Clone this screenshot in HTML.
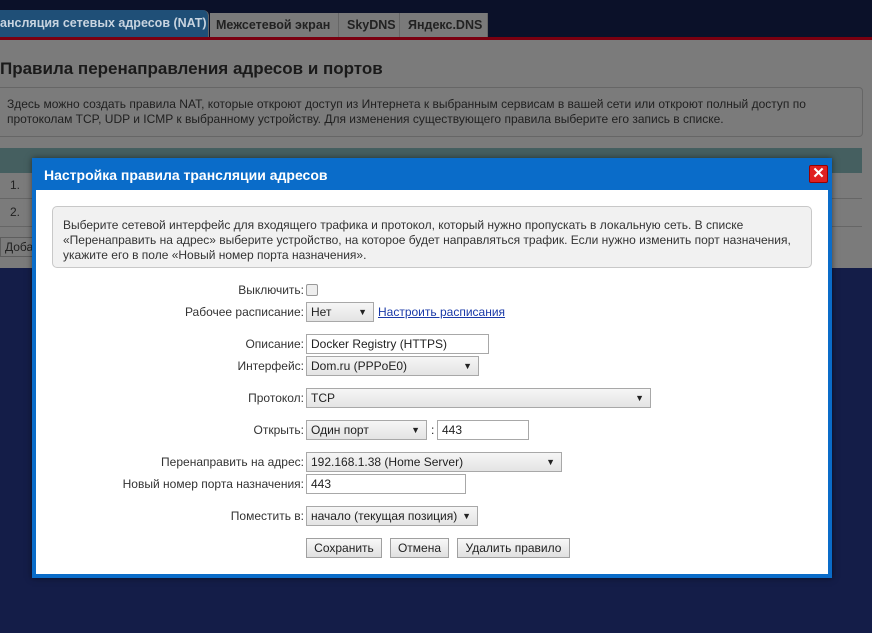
<!DOCTYPE html>
<html><head><meta charset="utf-8"><style>
*{box-sizing:border-box}
body{margin:0;width:872px;height:633px;overflow:hidden;background:#141d48;font-family:"Liberation Sans",sans-serif;position:relative;font-size:12px;color:#222}
.top{position:absolute;left:0;top:0;width:872px;height:38px;background:#0b1129}
.red{position:absolute;left:0;top:37px;width:872px;height:3px;background:#7a0010}
.tab{position:absolute;top:13px;height:24px;background:#7a7a7a;color:#222;font-weight:bold;font-size:12.5px;line-height:24px;padding:0 8px;border-right:1px solid #666;white-space:nowrap;overflow:hidden}
.page{position:absolute;left:0;top:40px;width:872px;height:228px;background:#7b7b7b}
.a{position:absolute;white-space:nowrap}
.box{position:absolute;border:1px solid #666;border-radius:4px}
.dlg{position:absolute;left:32px;top:158px;width:800px;height:420px;background:#0a6cc9;box-shadow:0 0 6px rgba(0,0,0,.5)}
.dlgt{position:absolute;left:12px;top:9px;color:#fff;font-weight:bold;font-size:14px}
.x{position:absolute;left:777px;top:7px;width:19px;height:18px;background:#e02020;border:1px solid #900;color:#fff;font-weight:bold;text-align:center;line-height:16px;font-size:15px;border-radius:2px}
.body{position:absolute;left:4px;top:32px;width:792px;height:384px;background:#fff}
.info{position:absolute;left:16px;top:16px;width:760px;height:62px;background:#f1f1f1;border:1px solid #c8c8c8;border-radius:5px;padding:11px 10px;font-size:12px;line-height:15px;color:#333}
.l{position:absolute;text-align:right;white-space:nowrap;font-size:12px;color:#333}
.sel,.inp{position:absolute;height:20px;border:1px solid #a8a8a8;font-size:12px;line-height:18px;padding-left:4px;color:#222;white-space:nowrap}
.sel{background:linear-gradient(#f6f6f6,#e4e4e4)}
.sel:after{content:"▼";position:absolute;right:6px;top:0;font-size:9px}
.inp{background:#fff}
.btn{position:absolute;height:20px;border:1px solid #a0a0a0;background:linear-gradient(#f8f8f8,#e0e0e0);font-size:12px;line-height:18px;text-align:center;color:#222}
</style></head><body>
<div class="top"></div>
<div class="tab" style="left:0;top:10px;height:28px;line-height:26px;width:209px;background:#1f4f77;color:#c8d4e0;border-radius:0 6px 0 0;padding-left:0">ансляция сетевых адресов (NAT)</div>
<div class="tab" style="left:210px;width:129px;padding:0 6px">Межсетевой экран</div>
<div class="tab" style="left:339px;width:61px">SkyDNS</div>
<div class="tab" style="left:400px;width:88px">Яндекс.DNS</div>
<div class="red"></div>
<div class="page">
<div class="a" style="left:0;top:19px;font-size:17px;font-weight:bold;color:#1a1a1a">Правила перенаправления адресов и портов</div>
<div class="box" style="left:-4px;top:47px;width:867px;height:50px"></div>
<div class="a" style="left:7px;top:57px;line-height:15px;color:#1f1f1f">Здесь можно создать правила NAT, которые откроют доступ из Интернета к выбранным сервисам в вашей сети или откроют полный доступ по<br>протоколам TCP, UDP и ICMP к выбранному устройству. Для изменения существующего правила выберите его запись в списке.</div>
<div style="position:absolute;left:0;top:108px;width:862px;height:25px;background:#455f60"></div>
<div class="a" style="left:10px;top:138px;color:#222">1.</div>
<div class="a" style="left:10px;top:165px;color:#222">2.</div>
<div style="position:absolute;left:0;top:158px;width:862px;height:1px;background:#666"></div>
<div style="position:absolute;left:0;top:186px;width:862px;height:1px;background:#666"></div>
<div class="a" style="left:0;top:197px;border:1px solid #5e5e5e;padding:2px 4px;color:#222">Доба</div>
</div>
<div class="dlg">
<div class="dlgt">Настройка правила трансляции адресов</div>
<div class="x">✕</div>
<div class="body">
<div class="info">Выберите сетевой интерфейс для входящего трафика и протокол, который нужно пропускать в локальную сеть. В списке «Перенаправить на адрес» выберите устройство, на которое будет направляться трафик. Если нужно изменить порт назначения, укажите его в поле «Новый номер порта назначения».</div>
<div class="l" style="right:524px;top:93px">Выключить:</div>
<div style="position:absolute;left:270px;top:94px;width:12px;height:12px;border:1px solid #999;border-radius:2px;background:#eee"></div>
<div class="l" style="right:524px;top:115px">Рабочее расписание:</div>
<div class="sel" style="left:270px;top:112px;width:68px">Нет</div>
<div class="a" style="left:342px;top:115px;color:#1a3aa8;text-decoration:underline">Настроить расписания</div>
<div class="l" style="right:524px;top:147px">Описание:</div>
<div class="inp" style="left:270px;top:144px;width:183px">Docker Registry (HTTPS)</div>
<div class="l" style="right:524px;top:169px">Интерфейс:</div>
<div class="sel" style="left:270px;top:166px;width:173px">Dom.ru (PPPoE0)</div>
<div class="l" style="right:524px;top:201px">Протокол:</div>
<div class="sel" style="left:270px;top:198px;width:345px">TCP</div>
<div class="l" style="right:524px;top:233px">Открыть:</div>
<div class="sel" style="left:270px;top:230px;width:121px">Один порт</div>
<div class="a" style="left:395px;top:233px">:</div>
<div class="inp" style="left:401px;top:230px;width:92px">443</div>
<div class="l" style="right:524px;top:265px">Перенаправить на адрес:</div>
<div class="sel" style="left:270px;top:262px;width:256px">192.168.1.38 (Home Server)</div>
<div class="l" style="right:524px;top:287px">Новый номер порта назначения:</div>
<div class="inp" style="left:270px;top:284px;width:160px">443</div>
<div class="l" style="right:524px;top:319px">Поместить в:</div>
<div class="sel" style="left:270px;top:316px;width:172px">начало (текущая позиция)</div>
<div class="btn" style="left:270px;top:348px;width:76px">Сохранить</div>
<div class="btn" style="left:354px;top:348px;width:59px">Отмена</div>
<div class="btn" style="left:421px;top:348px;width:113px">Удалить правило</div>
</div>
</div>
</body></html>
